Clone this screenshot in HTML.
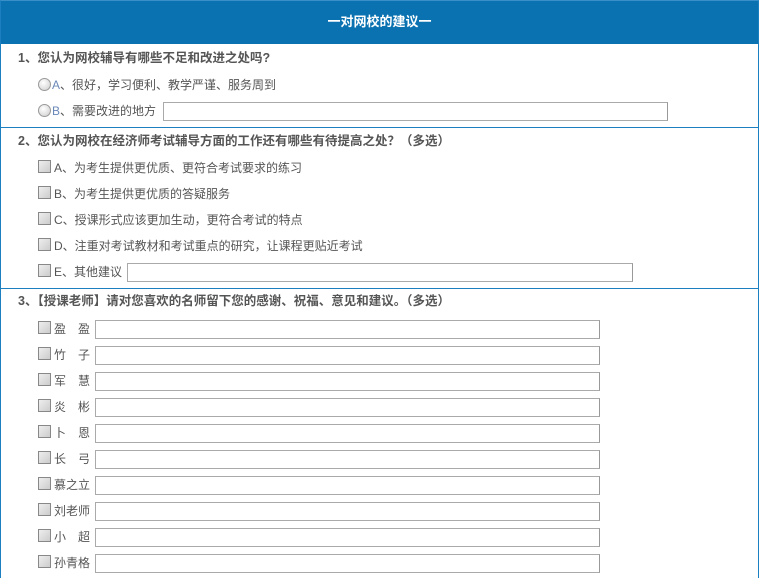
<!DOCTYPE html>
<html><head><meta charset="utf-8"><style>
*{margin:0;padding:0;box-sizing:border-box}
html,body{width:760px;height:578px;overflow:hidden}
body{background:#fff;position:relative;font-family:"Liberation Sans","Noto Sans CJK SC",sans-serif;font-size:12px;color:#555}
#frame{position:absolute;left:0;top:0;width:759px;height:590px;border:1px solid #1c7fbf;border-top:1px solid #3a8fc8}
#hd{position:absolute;left:1px;top:1px;width:757px;height:43px;background:#0b72b1;color:#fff;text-align:center;line-height:41px;font-weight:bold;font-size:13px}
.sep{position:absolute;left:1px;width:757px;height:1px;background:#1c7fbf}
.q{position:absolute;left:18px;font-weight:bold;color:#555;font-size:12.5px;line-height:16px}
.r{position:absolute;left:38px;line-height:16px;white-space:nowrap}
.rd{display:inline-block;width:13px;height:13px;border-radius:50%;border:1px solid #999;background:radial-gradient(circle at 40% 35%,#fff,#ccc);vertical-align:-2px;margin-right:1px}
.cb{display:inline-block;width:13px;height:13px;border:1px solid #888;background:linear-gradient(135deg,#eee,#ccc);vertical-align:-1px;margin-right:3px}
.in{position:absolute;height:19px;border:1px solid #aaa;border-right-color:#999;background:#fff}
.r i{font-style:normal;color:#6a88b8}
</style></head><body>
<div id="frame"></div>
<div id="hd">一对网校的建议一</div>
<div class="q" style="top:50px">1、您认为网校辅导有哪些不足和改进之处吗?</div>
<div class="r" style="top:77px"><span class="rd"></span><i>A</i>、很好，学习便利、教学严谨、服务周到</div>
<div class="r" style="top:103px"><span class="rd"></span><i>B</i>、需要改进的地方</div>
<div class="in" style="left:163px;top:102px;width:505px"></div>
<div class="sep" style="top:127px"></div>
<div class="q" style="top:133px">2、您认为网校在经济师考试辅导方面的工作还有哪些有待提高之处？（多选）</div>
<div class="r" style="top:160px"><span class="cb"></span>A、为考生提供更优质、更符合考试要求的练习</div>
<div class="r" style="top:186px"><span class="cb"></span>B、为考生提供更优质的答疑服务</div>
<div class="r" style="top:212px"><span class="cb"></span>C、授课形式应该更加生动，更符合考试的特点</div>
<div class="r" style="top:238px"><span class="cb"></span>D、注重对考试教材和考试重点的研究，让课程更贴近考试</div>
<div class="r" style="top:264px"><span class="cb"></span>E、其他建议</div>
<div class="in" style="left:127px;top:263px;width:506px"></div>
<div class="sep" style="top:288px"></div>
<div class="q" style="top:293px">3、【授课老师】请对您喜欢的名师留下您的感谢、祝福、意见和建议。（多选）</div>
<div class="r" style="top:321px"><span class="cb"></span>盈　盈</div><div class="in" style="left:95px;top:320px;width:505px"></div>
<div class="r" style="top:347px"><span class="cb"></span>竹　子</div><div class="in" style="left:95px;top:346px;width:505px"></div>
<div class="r" style="top:373px"><span class="cb"></span>军　慧</div><div class="in" style="left:95px;top:372px;width:505px"></div>
<div class="r" style="top:399px"><span class="cb"></span>炎　彬</div><div class="in" style="left:95px;top:398px;width:505px"></div>
<div class="r" style="top:425px"><span class="cb"></span>卜　恩</div><div class="in" style="left:95px;top:424px;width:505px"></div>
<div class="r" style="top:451px"><span class="cb"></span>长　弓</div><div class="in" style="left:95px;top:450px;width:505px"></div>
<div class="r" style="top:477px"><span class="cb"></span>慕之立</div><div class="in" style="left:95px;top:476px;width:505px"></div>
<div class="r" style="top:503px"><span class="cb"></span>刘老师</div><div class="in" style="left:95px;top:502px;width:505px"></div>
<div class="r" style="top:529px"><span class="cb"></span>小　超</div><div class="in" style="left:95px;top:528px;width:505px"></div>
<div class="r" style="top:555px"><span class="cb"></span>孙青格</div><div class="in" style="left:95px;top:554px;width:505px"></div>
</body></html>
